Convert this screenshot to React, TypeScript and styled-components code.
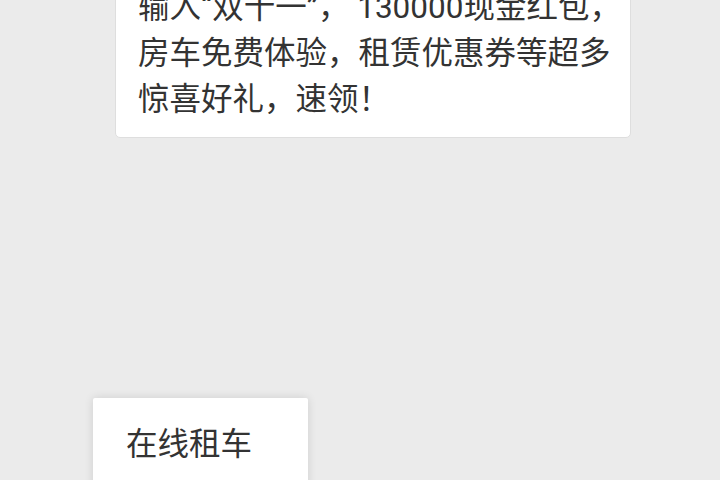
import React from 'react'
import styled, { createGlobalStyle } from 'styled-components'

const GlobalStyle = createGlobalStyle`
  html, body {
    margin: 0;
    padding: 0;
    background: #ebebeb;
    overflow: hidden;
  }
  body {
    font-family: Roboto, "Noto Sans CJK SC", sans-serif;
  }
`

const Page = styled.div`
  position: relative;
  width: 720px;
  height: 480px;
  overflow: hidden;
  background: #ebebeb;
`

const MessageCard = styled.div`
  margin: -32px 0 0 115px;
  width: 516px;
  box-sizing: border-box;
  padding: 16px 20px 14px 22px;
  background: #fff;
  border: 1px solid #dedede;
  border-radius: 5px;
`

const MessageText = styled.p`
  margin: 0;
  font-size: 31.5px;
  line-height: 46px;
  color: #333;
  white-space: nowrap;
`

const PopupMenu = styled.div`
  position: absolute;
  left: 93px;
  top: 398px;
  width: 215px;
  padding: 24px 0 40px;
  background: #fff;
  box-shadow: 0 0 10px rgba(0, 0, 0, 0.12);
  border-radius: 2px;
`

const MenuItem = styled.div`
  padding-left: 33px;
  font-size: 31.5px;
  line-height: 46px;
  color: #333;
`

const lines = ['输入“双十一”， 130000现金红包，', '房车免费体验，租赁优惠券等超多', '惊喜好礼，速领！']

export default function App() {
  return (
    <Page>
      <GlobalStyle />
      <MessageCard>
        <MessageText>
          {lines.map((l, i) => (
            <React.Fragment key={i}>
              {l}
              {i < lines.length - 1 && <br />}
            </React.Fragment>
          ))}
        </MessageText>
      </MessageCard>
      <PopupMenu>
        <MenuItem>在线租车</MenuItem>
      </PopupMenu>
    </Page>
  )
}
